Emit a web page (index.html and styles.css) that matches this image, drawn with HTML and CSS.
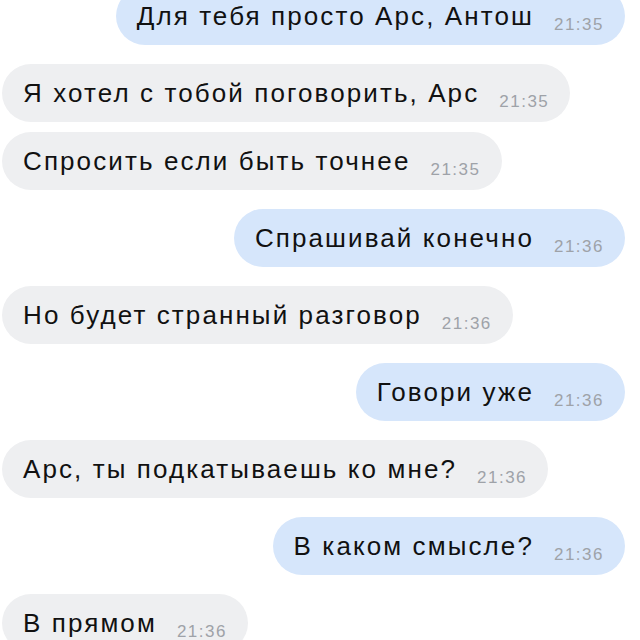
FILE: index.html
```html
<!DOCTYPE html>
<html lang="ru">
<head>
<meta charset="UTF-8">
<meta name="viewport" content="width=device-width, initial-scale=1.0">
<title>Чат</title>
<link rel="stylesheet" href="styles.css">
</head>
<body>

<div class="chat">
    <div class="row out">
        <div class="bubble">Для тебя просто Арс, Антош<span class="time">21:35</span></div>
    </div>
    <div class="row in">
        <div class="bubble">Я хотел с тобой поговорить, Арс<span class="time">21:35</span></div>
    </div>
    <div class="row in same">
        <div class="bubble">Спросить если быть точнее<span class="time">21:35</span></div>
    </div>
    <div class="row out">
        <div class="bubble">Спрашивай конечно<span class="time">21:36</span></div>
    </div>
    <div class="row in">
        <div class="bubble">Но будет странный разговор<span class="time">21:36</span></div>
    </div>
    <div class="row out">
        <div class="bubble">Говори уже<span class="time">21:36</span></div>
    </div>
    <div class="row in">
        <div class="bubble">Арс, ты подкатываешь ко мне?<span class="time">21:36</span></div>
    </div>
    <div class="row out">
        <div class="bubble">В каком смысле?<span class="time">21:36</span></div>
    </div>
    <div class="row in">
        <div class="bubble">В прямом<span class="time">21:36</span></div>
    </div>
</div>

</body>
</html>
```

FILE: styles.css
```css
body {
    margin: 0;
    background-color: #ffffff;
    font-family: "Liberation Sans", Arial, sans-serif;
    overflow: hidden;
}

.chat {
    margin-top: -13px;
}

.row {
    display: flex;
    margin-top: 19px;
}

.row:first-child {
    margin-top: 0;
}

.row.same {
    margin-top: 10px;
}

.row.in {
    justify-content: flex-start;
    padding-left: 2px;
}

.row.out {
    justify-content: flex-end;
    padding-right: 15px;
}

.bubble {
    height: 58px;
    line-height: 58px;
    padding: 0 21px 0 21px;
    border-radius: 29px;
    font-size: 26px;
    letter-spacing: 2.1px;
    color: #111111;
    white-space: nowrap;
}

.in .bubble {
    background-color: #eeeff1;
}

.out .bubble {
    background-color: #d6e6fb;
}

.time {
    margin-left: 20px;
    font-size: 17px;
    letter-spacing: 1.5px;
    color: #9ea2a8;
    vertical-align: -5px;
}
```
